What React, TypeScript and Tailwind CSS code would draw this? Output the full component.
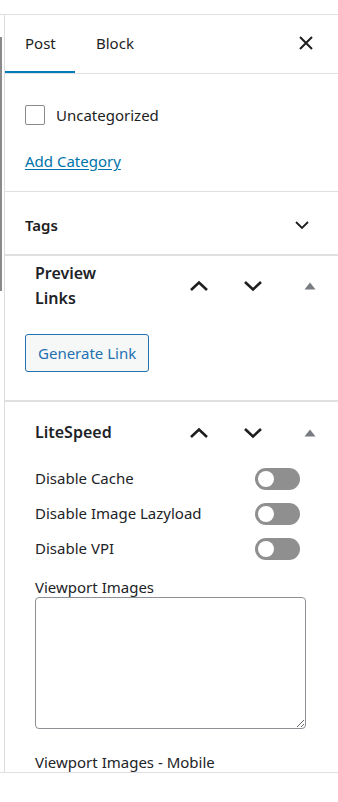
import React from "react";

const font = { fontFamily: '"Noto Sans", "Open Sans", Arial, sans-serif' };

function ChevronUp() {
  return (
    <svg width="20" height="12" viewBox="0 0 20 12" fill="none">
      <polyline points="2,10 10,2.5 18,10" stroke="#1e1e1e" strokeWidth="2.6" />
    </svg>
  );
}

function ChevronDown({ small }: { small?: boolean }) {
  if (small) {
    return (
      <svg width="16" height="10" viewBox="0 0 16 10" fill="none">
        <polyline points="2,2 8,8 14,2" stroke="#1e1e1e" strokeWidth="1.8" />
      </svg>
    );
  }
  return (
    <svg width="20" height="12" viewBox="0 0 20 12" fill="none">
      <polyline points="2,2 10,9.5 18,2" stroke="#1e1e1e" strokeWidth="2.6" />
    </svg>
  );
}

function Triangle() {
  return (
    <svg width="12" height="8" viewBox="0 0 12 8">
      <polygon points="6,0.5 11.5,7.5 0.5,7.5" fill="#787c82" />
    </svg>
  );
}

function CloseIcon() {
  return (
    <svg width="16" height="16" viewBox="0 0 16 16" fill="none">
      <path d="M2 2 L14 14 M14 2 L2 14" stroke="#1e1e1e" strokeWidth="2" />
    </svg>
  );
}

function Toggle() {
  return (
    <div className="w-[45px] h-[22px] rounded-full bg-[#8f8f8f] flex items-center px-[3px]">
      <div className="w-[16px] h-[16px] rounded-full bg-white" />
    </div>
  );
}

function MetaboxHeader({ title }: { title: React.ReactNode }) {
  return (
    <div className="flex items-center pl-[30px] pr-[22px]">
      <h2 className="flex-1 text-[16px] font-semibold leading-[25px] text-[#1d2327]">{title}</h2>
      <div className="flex items-center">
        <div className="w-[20px] flex justify-center mr-[34px]">
          <ChevronUp />
        </div>
        <div className="w-[20px] flex justify-center mr-[41px]">
          <ChevronDown />
        </div>
        <Triangle />
      </div>
    </div>
  );
}

function ToggleRow({ label }: { label: string }) {
  return (
    <div className="flex items-center justify-between h-[35px]">
      <span className="text-[15px] text-[#1d2327]">{label}</span>
      <Toggle />
    </div>
  );
}

export default function App() {
  return (
    <div className="w-[338px] h-[802px] bg-white overflow-hidden" style={font}>
      <div className="h-[14px]" />
      <div className="flex h-[759px] border-t border-b border-[#e0e0e0]">
        {/* scrollbar strip */}
        <div className="relative w-[4px] shrink-0">
          <div className="absolute left-0 top-[22px] w-[2px] h-[254px] bg-[#8a8a8a]" />
        </div>
        <div className="flex-1 min-w-0 border-l border-[#dcdcde] overflow-hidden">
          {/* Tabs */}
          <div className="flex items-stretch h-[59px] border-b border-[#e0e0e0]">
            <div className="w-[70px] flex items-center pl-[20px] border-b-2 border-[#007cba]">
              <span className="text-[15px] text-[#1e1e1e] pt-[1px]">Post</span>
            </div>
            <div className="flex items-center pl-[21px] border-b-2 border-transparent">
              <span className="text-[15px] text-[#1e1e1e] pt-[1px]">Block</span>
            </div>
            <div className="flex-1" />
            <div className="flex items-center pr-[24px] border-b-2 border-transparent">
              <CloseIcon />
            </div>
          </div>

          {/* Categories */}
          <div className="h-[118px] border-b border-[#e0e0e0] pl-[20px] pt-[30px]">
            <div className="flex items-center gap-[11px]">
              <div className="w-[20px] h-[20px] border border-[#8a8a8a] rounded-[2px]" />
              <span className="text-[15px] text-[#1e1e1e]">Uncategorized</span>
            </div>
            <div className="mt-[22px]">
              <span className="text-[15px] text-[#0073aa] underline underline-offset-2">Add Category</span>
            </div>
          </div>

          {/* Tags */}
          <div className="h-[64px] flex items-center justify-between pl-[20px] pr-[28px] pt-[4px] border-b-2 border-[#e0e0e0]">
            <span className="text-[15px] font-semibold text-[#1e1e1e]">Tags</span>
            <ChevronDown small />
          </div>

          {/* Preview Links */}
          <div className="h-[146px] border-b-2 border-[#e0e0e0] pt-[5px]">
            <MetaboxHeader
              title={
                <>
                  Preview
                  <br />
                  Links
                </>
              }
            />
            <div className="pl-[20px] mt-[23px]">
              <button className="h-[38px] px-[12px] rounded-[3px] border border-[#2271b1] bg-[#f6f7f7] text-[15px] text-[#2271b1]">
                Generate Link
              </button>
            </div>
          </div>

          {/* LiteSpeed */}
          <div className="pt-[18px]">
            <MetaboxHeader title="LiteSpeed" />
            <div className="pl-[30px] pr-[38px] mt-[16px]">
              <ToggleRow label="Disable Cache" />
              <ToggleRow label="Disable Image Lazyload" />
              <ToggleRow label="Disable VPI" />
              <div className="mt-[11px] text-[15px] leading-[20px] text-[#1d2327]">Viewport Images</div>
              <div>
                <textarea
                  className="block w-[271px] h-[132px] border border-[#8c8f94] rounded-[4px] bg-white resize-y"
                  readOnly
                />
              </div>
              <div className="mt-[23px] text-[15px] leading-[20px] text-[#1d2327]">Viewport Images - Mobile</div>
            </div>
          </div>
        </div>
      </div>
    </div>
  );
}
